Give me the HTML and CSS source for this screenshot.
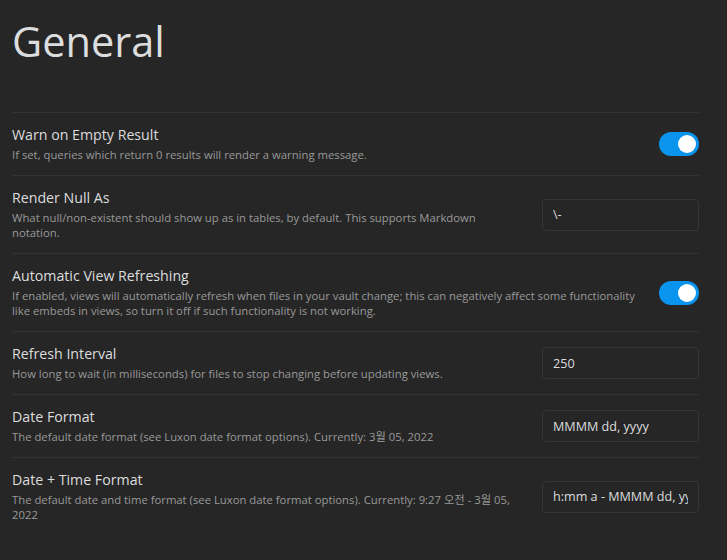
FILE: index.html
```html
<!DOCTYPE html>
<html lang="en">
<head>
<meta charset="utf-8">
<title>General</title>
<link rel="stylesheet" href="styles.css">
</head>
<body>
<div class="page">
  <h1 class="title">General</h1>

  <div class="setting">
    <div class="info">
      <div class="name">Warn on Empty Result</div>
      <div class="desc">If set, queries which return 0 results will render a warning message.</div>
    </div>
    <div class="control"><div class="toggle is-on"></div></div>
  </div>

  <div class="setting">
    <div class="info">
      <div class="name">Render Null As</div>
      <div class="desc">What null/non-existent should show up as in tables, by default. This supports Markdown notation.</div>
    </div>
    <div class="control"><input class="text-input" type="text" value="\-"></div>
  </div>

  <div class="setting">
    <div class="info">
      <div class="name">Automatic View Refreshing</div>
      <div class="desc">If enabled, views will automatically refresh when files in your vault change; this can negatively affect some functionality like embeds in views, so turn it off if such functionality is not working.</div>
    </div>
    <div class="control"><div class="toggle is-on"></div></div>
  </div>

  <div class="setting">
    <div class="info">
      <div class="name">Refresh Interval</div>
      <div class="desc">How long to wait (in milliseconds) for files to stop changing before updating views.</div>
    </div>
    <div class="control"><input class="text-input" type="text" value="250"></div>
  </div>

  <div class="setting">
    <div class="info">
      <div class="name">Date Format</div>
      <div class="desc">The default date format (see Luxon date format options). Currently: 3월 05, 2022</div>
    </div>
    <div class="control"><input class="text-input" type="text" value="MMMM dd, yyyy"></div>
  </div>

  <div class="setting">
    <div class="info">
      <div class="name">Date + Time Format</div>
      <div class="desc">The default date and time format (see Luxon date format options). Currently: 9:27 오전 - 3월 05, 2022</div>
    </div>
    <div class="control"><input class="text-input" type="text" value="h:mm a - MMMM dd, yyyy"></div>
  </div>
</div>
</body>
</html>
```

FILE: styles.css
```css
html, body {
  margin: 0;
  padding: 0;
  background: #262626;
}

body {
  font-family: "Open Sans", "Noto Sans CJK KR", sans-serif;
  color: #dcddde;
  height: 560px;
  overflow: hidden;
}

.page {
  padding: 0 28px 0 12px;
}

.title {
  margin: 11px 0 41px;
  font-size: 41.5px;
  line-height: 60px;
  font-weight: 400;
  color: #dcddde;
}

.setting {
  display: flex;
  align-items: center;
  border-top: 1px solid #333333;
  padding: 12px 0;
}

.info {
  flex: 1 1 auto;
  margin-right: 22px;
}

.name {
  font-size: 14.2px;
  line-height: 20px;
  color: #dcddde;
}

.desc {
  font-size: 11.3px;
  line-height: 15px;
  padding-top: 2px;
  margin-bottom: 1px;
  color: #999999;
}

.control {
  flex: 0 0 auto;
  display: flex;
  align-items: center;
}

.toggle {
  position: relative;
  width: 40px;
  height: 24px;
  border-radius: 12px;
  background: #0a94ee;
}

.toggle::after {
  content: "";
  position: absolute;
  top: 3px;
  right: 3px;
  width: 18px;
  height: 18px;
  border-radius: 50%;
  background: #ffffff;
}

.text-input {
  box-sizing: border-box;
  width: 157px;
  height: 32px;
  padding: 0 10px;
  border: 1px solid #363636;
  border-radius: 4px;
  background: #262626;
  color: #dcddde;
  font-family: "Open Sans", "Noto Sans CJK KR", sans-serif;
  font-size: 12.6px;
  outline: none;
}
```
